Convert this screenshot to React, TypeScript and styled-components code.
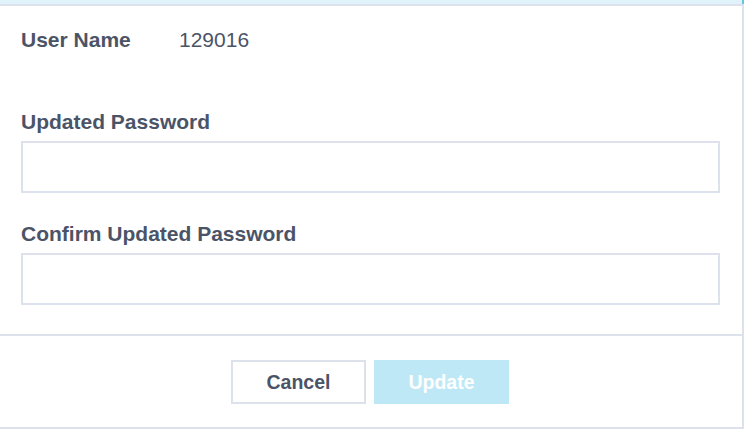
import React from 'react';
import styled, { createGlobalStyle } from 'styled-components';

const GlobalStyle = createGlobalStyle`
  html, body {
    margin: 0;
    padding: 0;
    background: #ffffff;
    font-family: 'Liberation Sans', Arial, sans-serif;
  }
`;

const Modal = styled.div`
  width: 742px;
  border-right: 2px solid #dde1ec;
  border-bottom: 2px solid #dde1ec;
  box-shadow: 0 2px 0 #cfd0d4;
  background: #ffffff;
`;

const HeaderStrip = styled.div`
  height: 4px;
  background: #e1f3fa;
  border-bottom: 2px solid #dde1ec;
  margin-right: -2px;
  display: flex;
  justify-content: flex-end;
`;

const ScrollMark = styled.div`
  width: 2px;
  height: 4px;
  background: #6cc3e0;
`;

const Body = styled.div`
  padding: 22px 22px 29px 21px;
  border-bottom: 2px solid #dde1ec;
`;

const InfoRow = styled.div`
  display: flex;
  font-size: 21px;
  line-height: 24px;
  color: #4b5467;
`;

const InfoLabel = styled.div`
  width: 158px;
  font-weight: bold;
`;

const Field = styled.div<{ $top: number }>`
  margin-top: ${(p) => p.$top}px;
  display: flex;
  flex-direction: column;
  gap: 7px;
`;

const Label = styled.label`
  font-size: 21px;
  line-height: 24px;
  font-weight: bold;
  color: #4b5467;
`;

const Input = styled.input`
  box-sizing: border-box;
  width: 699px;
  height: 52px;
  border: 2px solid #dde1ec;
  outline: none;
  font-size: 16px;
  padding: 0 12px;
  font-family: inherit;
`;

const Footer = styled.div`
  display: flex;
  justify-content: center;
  gap: 8px;
  padding: 24px 2px 23px 0;
`;

const Button = styled.button<{ $primary?: boolean }>`
  box-sizing: border-box;
  width: 135px;
  height: 44px;
  font-family: inherit;
  font-size: 19.5px;
  font-weight: bold;
  cursor: pointer;
  border: ${(p) => (p.$primary ? 'none' : '2px solid #dde1ec')};
  background: ${(p) => (p.$primary ? '#bee8f5' : '#ffffff')};
  color: ${(p) => (p.$primary ? '#ffffff' : '#4b5467')};
`;

export default function App() {
  return (
    <>
      <GlobalStyle />
      <Modal>
        <HeaderStrip>
          <ScrollMark />
        </HeaderStrip>
        <Body>
          <InfoRow>
            <InfoLabel>User Name</InfoLabel>
            <div>129016</div>
          </InfoRow>
          <Field $top={58}>
            <Label>Updated Password</Label>
            <Input type="password" />
          </Field>
          <Field $top={29}>
            <Label>Confirm Updated Password</Label>
            <Input type="password" />
          </Field>
        </Body>
        <Footer>
          <Button>Cancel</Button>
          <Button $primary disabled>
            Update
          </Button>
        </Footer>
      </Modal>
    </>
  );
}
